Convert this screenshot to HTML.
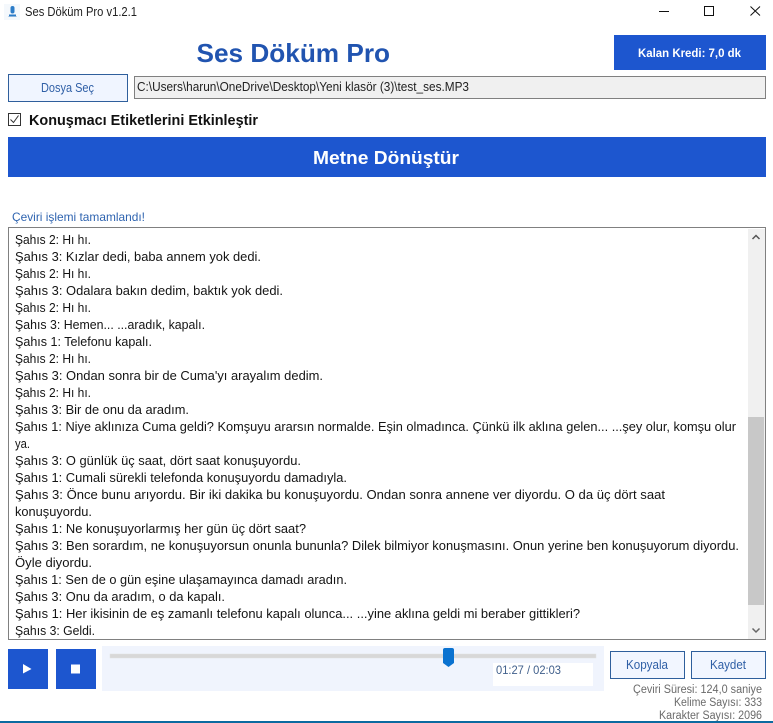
<!DOCTYPE html>
<html><head><meta charset="utf-8"><title>Ses Döküm Pro v1.2.1</title>
<style>
html,body{margin:0;padding:0;background:#fff;width:773px;height:723px;overflow:hidden}
svg{display:block}
text{font-family:"Liberation Sans",sans-serif;white-space:pre}
.l{font-size:13px;fill:#141414}
.b{font-weight:bold}
</style></head><body>
<svg width="773" height="723" viewBox="0 0 773 723" xmlns="http://www.w3.org/2000/svg">
<rect width="773" height="723" fill="#fff"/>
<!-- title bar -->
<rect x="4" y="4" width="16" height="16" fill="#f4f8fc"/>
<rect x="10.500" y="6" width="4" height="7.500" rx="2" fill="#2b7cc8"/>
<rect x="9" y="14.500" width="7" height="1.500" fill="#2b7cc8"/>
<rect x="8.500" y="16" width="8" height="1" fill="#8ab4dc"/>
<text x="25" y="16" font-size="12.500" fill="#222" textLength="112" lengthAdjust="spacingAndGlyphs">Ses Döküm Pro v1.2.1</text>
<path d="M659 11.500H669" stroke="#111" stroke-width="1"/>
<rect x="704.500" y="6.500" width="9" height="9" fill="none" stroke="#111" stroke-width="1"/>
<path d="M750.500 6.500L760 15.500M760 6.500L750.500 15.500" stroke="#111" stroke-width="1"/>
<!-- header -->
<text x="196.500" y="62" class="b" font-size="26" fill="#2154b0" textLength="193.500" lengthAdjust="spacingAndGlyphs">Ses Döküm Pro</text>
<rect x="614" y="35" width="152" height="35" fill="#1d56cf"/>
<text x="638" y="57" class="b" font-size="12" fill="#fff" textLength="103" lengthAdjust="spacingAndGlyphs">Kalan Kredi: 7,0 dk</text>
<!-- file row -->
<rect x="8.500" y="74.500" width="119" height="27" fill="#f0f5ff" stroke="#2f5f9c" stroke-width="1"/>
<text x="41" y="92" font-size="12.500" fill="#2f5fa6" textLength="53" lengthAdjust="spacingAndGlyphs">Dosya Seç</text>
<rect x="134.500" y="76.500" width="631" height="22" fill="#f0f0f0" stroke="#808080" stroke-width="1"/>
<text x="137" y="91" font-size="12.500" fill="#222" textLength="332" lengthAdjust="spacingAndGlyphs">C:\Users\harun\OneDrive\Desktop\Yeni klasör (3)\test_ses.MP3</text>
<!-- checkbox -->
<rect x="8.500" y="113.500" width="12" height="12" fill="#fff" stroke="#333" stroke-width="1"/>
<path d="M10.500 119.500L13.500 122.500L18.500 115.500" fill="none" stroke="#333" stroke-width="1"/>
<text x="29" y="125" class="b" font-size="14.500" fill="#111" textLength="229" lengthAdjust="spacingAndGlyphs">Konuşmacı Etiketlerini Etkinleştir</text>
<!-- convert -->
<rect x="8" y="137" width="758" height="40" fill="#1d56cf"/>
<text x="313" y="164" class="b" font-size="18" fill="#fff" textLength="146" lengthAdjust="spacingAndGlyphs">Metne Dönüştür</text>
<text x="12" y="221" font-size="12" fill="#2f64b0" textLength="133" lengthAdjust="spacingAndGlyphs">Çeviri işlemi tamamlandı!</text>
<!-- text box -->
<rect x="8.500" y="227.500" width="757" height="412" fill="#fff" stroke="#808080" stroke-width="1"/>
<rect x="748" y="229" width="17" height="410" fill="#f0f0f0"/>
<rect x="748" y="417" width="16" height="188" fill="#c8c8c8"/>
<path d="M752.500 239L756 235.500L759.500 239" fill="none" stroke="#555" stroke-width="1.500"/>
<path d="M752.500 628.500L756 632L759.500 628.500" fill="none" stroke="#666" stroke-width="1.500"/>
<text class="l" x="15" y="244" textLength="76" lengthAdjust="spacingAndGlyphs">Şahıs 2: Hı hı.</text>
<text class="l" x="15" y="261" textLength="246" lengthAdjust="spacingAndGlyphs">Şahıs 3: Kızlar dedi, baba annem yok dedi.</text>
<text class="l" x="15" y="278" textLength="76" lengthAdjust="spacingAndGlyphs">Şahıs 2: Hı hı.</text>
<text class="l" x="15" y="295" textLength="268" lengthAdjust="spacingAndGlyphs">Şahıs 3: Odalara bakın dedim, baktık yok dedi.</text>
<text class="l" x="15" y="312" textLength="76" lengthAdjust="spacingAndGlyphs">Şahıs 2: Hı hı.</text>
<text class="l" x="15" y="329" textLength="190" lengthAdjust="spacingAndGlyphs">Şahıs 3: Hemen... ...aradık, kapalı.</text>
<text class="l" x="15" y="346" textLength="137" lengthAdjust="spacingAndGlyphs">Şahıs 1: Telefonu kapalı.</text>
<text class="l" x="15" y="363" textLength="76" lengthAdjust="spacingAndGlyphs">Şahıs 2: Hı hı.</text>
<text class="l" x="15" y="380" textLength="308" lengthAdjust="spacingAndGlyphs">Şahıs 3: Ondan sonra bir de Cuma'yı arayalım dedim.</text>
<text class="l" x="15" y="397" textLength="76" lengthAdjust="spacingAndGlyphs">Şahıs 2: Hı hı.</text>
<text class="l" x="15" y="414" textLength="174" lengthAdjust="spacingAndGlyphs">Şahıs 3: Bir de onu da aradım.</text>
<text class="l" x="15" y="431" textLength="721" lengthAdjust="spacingAndGlyphs">Şahıs 1: Niye aklınıza Cuma geldi? Komşuyu ararsın normalde. Eşin olmadınca. Çünkü ilk aklına gelen... ...şey olur, komşu olur</text>
<text class="l" x="15" y="448" textLength="15" lengthAdjust="spacingAndGlyphs">ya.</text>
<text class="l" x="15" y="465" textLength="286" lengthAdjust="spacingAndGlyphs">Şahıs 3: O günlük üç saat, dört saat konuşuyordu.</text>
<text class="l" x="15" y="482" textLength="332" lengthAdjust="spacingAndGlyphs">Şahıs 1: Cumali sürekli telefonda konuşuyordu damadıyla.</text>
<text class="l" x="15" y="499" textLength="650" lengthAdjust="spacingAndGlyphs">Şahıs 3: Önce bunu arıyordu. Bir iki dakika bu konuşuyordu. Ondan sonra annene ver diyordu. O da üç dört saat</text>
<text class="l" x="15" y="516" textLength="77" lengthAdjust="spacingAndGlyphs">konuşuyordu.</text>
<text class="l" x="15" y="533" textLength="291" lengthAdjust="spacingAndGlyphs">Şahıs 1: Ne konuşuyorlarmış her gün üç dört saat?</text>
<text class="l" x="15" y="550" textLength="724" lengthAdjust="spacingAndGlyphs">Şahıs 3: Ben sorardım, ne konuşuyorsun onunla bununla? Dilek bilmiyor konuşmasını. Onun yerine ben konuşuyorum diyordu.</text>
<text class="l" x="15" y="567" textLength="77" lengthAdjust="spacingAndGlyphs">Öyle diyordu.</text>
<text class="l" x="15" y="584" textLength="332" lengthAdjust="spacingAndGlyphs">Şahıs 1: Sen de o gün eşine ulaşamayınca damadı aradın.</text>
<text class="l" x="15" y="601" textLength="210" lengthAdjust="spacingAndGlyphs">Şahıs 3: Onu da aradım, o da kapalı.</text>
<text class="l" x="15" y="618" textLength="565" lengthAdjust="spacingAndGlyphs">Şahıs 1: Her ikisinin de eş zamanlı telefonu kapalı olunca... ...yine aklına geldi mi beraber gittikleri?</text>
<text class="l" x="15" y="635" textLength="80" lengthAdjust="spacingAndGlyphs">Şahıs 3: Geldi.</text>
<!-- controls -->
<rect x="8" y="649" width="40" height="40" fill="#1d56cf"/>
<path d="M23 664V673.500L31.500 669Z" fill="#fff"/>
<rect x="56" y="649" width="40" height="40" fill="#1d56cf"/>
<rect x="71" y="664.500" width="9" height="9" fill="#fff"/>
<rect x="102" y="646" width="502" height="45" fill="#f0f4fd"/>
<rect x="110" y="654" width="486" height="4" fill="#d8d8d8" stroke="#e2e2e2" stroke-width="0.500"/>
<path d="M443 650Q443 648 445 648H452Q454 648 454 650V663L448.500 667L443 663Z" fill="#0a72d0"/>
<rect x="493" y="663" width="100" height="23" fill="#fff"/>
<text x="496" y="674" font-size="12" fill="#41608c" textLength="65" lengthAdjust="spacingAndGlyphs">01:27 / 02:03</text>
<rect x="610.500" y="651.500" width="74" height="27" fill="#f2f6ff" stroke="#2f5f9c" stroke-width="1"/>
<text x="626" y="669" font-size="12.500" fill="#2f5fa6" textLength="42" lengthAdjust="spacingAndGlyphs">Kopyala</text>
<rect x="691.500" y="651.500" width="74" height="27" fill="#f2f6ff" stroke="#2f5f9c" stroke-width="1"/>
<text x="710" y="669" font-size="12.500" fill="#2f5fa6" textLength="36" lengthAdjust="spacingAndGlyphs">Kaydet</text>
<text x="633" y="693" font-size="11.500" fill="#6a6a6a" textLength="129" lengthAdjust="spacingAndGlyphs">Çeviri Süresi: 124,0 saniye</text>
<text x="674" y="706" font-size="11.500" fill="#6a6a6a" textLength="88" lengthAdjust="spacingAndGlyphs">Kelime Sayısı: 333</text>
<text x="659" y="719" font-size="11.500" fill="#6a6a6a" textLength="103" lengthAdjust="spacingAndGlyphs">Karakter Sayısı: 2096</text>
<rect x="0" y="721" width="773" height="2" fill="#0b6aa0"/>
</svg>
</body></html>
